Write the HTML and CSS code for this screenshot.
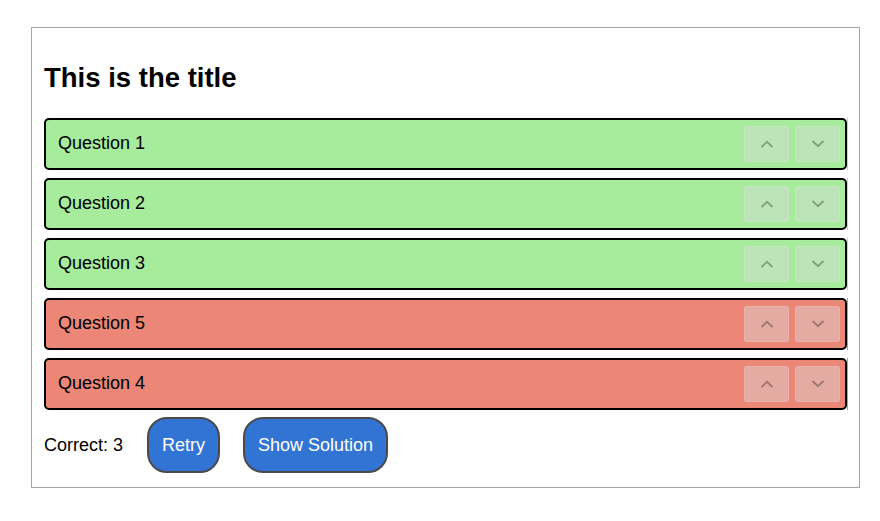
FILE: index.html
```html
<!DOCTYPE html>
<html>
<head>
<meta charset="utf-8">
<link rel="stylesheet" href="styles.css">
</head>
<body>
<div class="panel">
  <h2 class="title">This is the title</h2>
  <div class="list">
    <div class="item correct"><span class="label">Question 1</span>
      <div class="arrows">
        <span class="arrow"><svg viewBox="0 0 14 8" width="14" height="8"><path d="M1.5 7 L7 1.8 L12.5 7" /></svg></span>
        <span class="arrow"><svg viewBox="0 0 14 8" width="14" height="8"><path d="M1.5 1 L7 6.2 L12.5 1" /></svg></span>
      </div>
    </div>
    <div class="item correct"><span class="label">Question 2</span>
      <div class="arrows">
        <span class="arrow"><svg viewBox="0 0 14 8" width="14" height="8"><path d="M1.5 7 L7 1.8 L12.5 7" /></svg></span>
        <span class="arrow"><svg viewBox="0 0 14 8" width="14" height="8"><path d="M1.5 1 L7 6.2 L12.5 1" /></svg></span>
      </div>
    </div>
    <div class="item correct"><span class="label">Question 3</span>
      <div class="arrows">
        <span class="arrow"><svg viewBox="0 0 14 8" width="14" height="8"><path d="M1.5 7 L7 1.8 L12.5 7" /></svg></span>
        <span class="arrow"><svg viewBox="0 0 14 8" width="14" height="8"><path d="M1.5 1 L7 6.2 L12.5 1" /></svg></span>
      </div>
    </div>
    <div class="item wrong"><span class="label">Question 5</span>
      <div class="arrows">
        <span class="arrow"><svg viewBox="0 0 14 8" width="14" height="8"><path d="M1.5 7 L7 1.8 L12.5 7" /></svg></span>
        <span class="arrow"><svg viewBox="0 0 14 8" width="14" height="8"><path d="M1.5 1 L7 6.2 L12.5 1" /></svg></span>
      </div>
    </div>
    <div class="item wrong"><span class="label">Question 4</span>
      <div class="arrows">
        <span class="arrow"><svg viewBox="0 0 14 8" width="14" height="8"><path d="M1.5 7 L7 1.8 L12.5 7" /></svg></span>
        <span class="arrow"><svg viewBox="0 0 14 8" width="14" height="8"><path d="M1.5 1 L7 6.2 L12.5 1" /></svg></span>
      </div>
    </div>
  </div>
  <div class="footer">
    <span class="score">Correct: 3</span>
    <button class="btn">Retry</button>
    <button class="btn">Show Solution</button>
  </div>
</div>
</body>
</html>
```
FILE: styles.css
```css
html, body {
  margin: 0;
  padding: 0;
  background: #fff;
}
body {
  font-family: "Liberation Sans", Arial, sans-serif;
  color: #000;
}
.panel {
  box-sizing: border-box;
  width: 829px;
  height: 461px;
  margin: 27px 0 0 31px;
  border: 1px solid #a6a6a6;
  padding: 35px 12px 12px 12px;
}
.title {
  margin: 0 0 25px 0;
  font-size: 27.5px;
  line-height: 30px;
  font-weight: bold;
}
.list {
  display: flex;
  flex-direction: column;
  gap: 8px;
}
.item {
  position: relative;
  box-sizing: border-box;
  height: 52px;
  border: 2px solid #000;
  border-radius: 5px;
  display: flex;
  align-items: center;
  padding: 0 5px 0 12px;
}
.item::after {
  content: "";
  position: absolute;
  top: -2px;
  bottom: -2px;
  right: -3px;
  width: 1px;
}
.correct { background: #a7eb9d; }
.correct::after { background: #a7eb9d; }
.wrong { background: #ec8777; }
.wrong::after { background: #ec8777; }
.label {
  flex: 1;
  font-size: 18px;
  padding-bottom: 1px;
}
.arrows {
  display: flex;
  gap: 6px;
}
.arrow {
  box-sizing: border-box;
  width: 45px;
  height: 36px;
  border: 1px solid rgba(255,255,255,0.12);
  border-radius: 3px;
  background: rgba(219,219,219,0.44);
  display: flex;
  align-items: center;
  justify-content: center;
}
.arrow svg path {
  fill: none;
  stroke: rgba(0,0,0,0.3);
  stroke-width: 2;
}
.footer {
  display: flex;
  align-items: center;
  margin-top: 7px;
  gap: 23px;
}
.score {
  font-size: 18px;
  padding-right: 1px;
}
.btn {
  box-sizing: border-box;
  height: 56px;
  padding: 0 13px;
  border: 2px solid #4a4a4a;
  border-radius: 20px;
  background: #3274d4;
  color: #fff;
  font-family: "Liberation Sans", Arial, sans-serif;
  font-size: 18px;
}
```
